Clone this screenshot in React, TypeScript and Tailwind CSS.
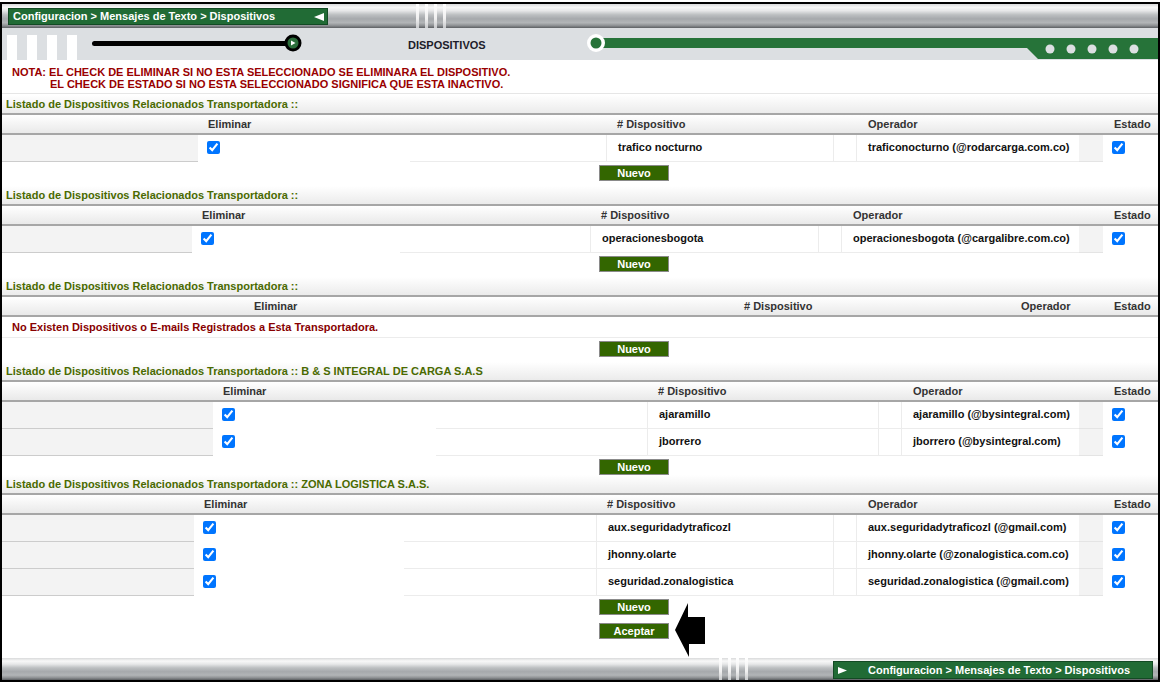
import React from 'react';

type Row = { disp: string; oper: string };

const metal =
  'bg-[linear-gradient(to_bottom,#d9dadb_0%,#f8f8f8_14%,#e6e7e8_28%,#bcbfc1_45%,#a6a9ac_62%,#b2b5b7_78%,#8d9093_90%,#5c5f62_100%)]';

const Check = () => (
  <input type="checkbox" defaultChecked className="w-[13px] h-[13px] m-0" />
);

const Button = ({ label }: { label: string }) => (
  <div className="w-[70px] h-[16px] shrink-0 bg-[#336600] border border-[#8a8a8a] flex items-center justify-center text-white font-bold text-[11px] leading-none">
    {label}
  </div>
);

const Grooves = ({ w }: { w: string }) => (
  <div className={`${w} h-full flex ${metal}`}>
    <div className="w-[6px]" />
    <div className="w-[3px] bg-[linear-gradient(to_bottom,#ffffff,#f0f0f0_60%,#c9cbcd)]" />
    <div className="w-[6px]" />
    <div className="w-[3px] bg-[linear-gradient(to_bottom,#ffffff,#f0f0f0_60%,#c9cbcd)]" />
    <div className="w-[6px]" />
    <div className="w-[3px] bg-[linear-gradient(to_bottom,#ffffff,#f0f0f0_60%,#c9cbcd)]" />
    <div className="w-[6px]" />
    <div className="w-[3px] bg-[linear-gradient(to_bottom,#ffffff,#f0f0f0_60%,#c9cbcd)]" />
  </div>
);

function Section({
  title,
  cols,
  rows,
  children,
}: {
  title: string;
  cols: string;
  rows?: Row[];
  children?: React.ReactNode;
}) {
  return (
    <div>
      <div className="h-[18px] flex items-center pl-[4px] bg-[linear-gradient(to_bottom,#ffffff,#ebebeb)] text-[#4a6a00] font-bold">
        {title}
      </div>
      <div
        className={`grid ${cols} h-[22px] border-y-2 border-[#a6a6a6] bg-[linear-gradient(to_bottom,#ffffff,#e9e9e9)] text-[#333333] font-bold`}
      >
        <div />
        <div className="flex items-center pl-[10px]">Eliminar</div>
        <div />
        <div className="flex items-center pl-[11px]"># Dispositivo</div>
        <div />
        <div className="flex items-center pl-[11px]">Operador</div>
        <div />
        <div className="flex items-center pl-[11px]">Estado</div>
      </div>
      {rows?.map((r) => (
        <div key={r.disp} className={`grid ${cols} h-[27px] text-[#111111] font-bold`}>
          <div className="bg-[#f3f3f3] border-b border-[#cccccc]" />
          <div className="flex items-center pl-[9px] pb-[2px]">
            <Check />
          </div>
          <div className="border-b border-[#ececec]" />
          <div className="flex items-center pl-[11px] pb-[2px] border-b border-l border-[#ececec]">{r.disp}</div>
          <div className="border-b border-x border-[#ececec]" />
          <div className="flex items-center pl-[11px] pb-[2px] border-b border-[#ececec]">{r.oper}</div>
          <div className="bg-[#f3f3f3] border-b border-[#e4e4e4]" />
          <div className="flex items-center pl-[9px] pb-[2px]">
            <Check />
          </div>
        </div>
      ))}
      {children}
    </div>
  );
}

export default function App() {
  const title = 'Listado de Dispositivos Relacionados Transportadora ::';

  return (
    <div className="w-[1160px] h-[683px] bg-white overflow-hidden font-['Liberation_Sans',Arial,sans-serif] text-[11px]">
      <div className="mt-[2px] h-[680px] border-2 border-black flex flex-col">
        {/* top bar */}
        <div className={`h-[24px] shrink-0 flex ${metal}`}>
          <div className="ml-[6px] mt-[4px] w-[320px] h-[17px] bg-[#216b35] border border-[#134a24] flex items-center pl-[4px] pr-[3px]">
            <span className="flex-1 text-white font-bold text-[11px]">
              Configuracion &gt; Mensajes de Texto &gt; Dispositivos
            </span>
            <svg width="10" height="8" viewBox="0 0 10 8">
              <polygon points="0,4 10,0 10,8" fill="#ffffff" />
            </svg>
          </div>
          <div className="ml-[82px]">
            <Grooves w="w-[40px]" />
          </div>
        </div>

        {/* title band */}
        <div className="h-[32px] shrink-0 flex bg-[#dcdfe2]">
          <div className="pl-[5px] flex gap-[10px] items-end">
            <div className="w-[10px] h-[25px] bg-white" />
            <div className="w-[10px] h-[25px] bg-white" />
            <div className="w-[10px] h-[25px] bg-white" />
            <div className="w-[10px] h-[25px] bg-white" />
          </div>
          <svg className="ml-[11px]" width="220" height="32" viewBox="0 0 220 32">
            <rect x="4" y="13" width="200" height="5" rx="2.5" fill="#000" />
            <circle cx="205" cy="15" r="8.5" fill="#000" />
            <circle cx="205" cy="15" r="5.5" fill="#2b6e3b" />
            <polygon points="203,12.5 203,17.5 207.5,15" fill="#ffffff" />
          </svg>
          <div className="ml-[100px] w-[178px] flex items-center text-[#1c1c2a] font-bold pt-[3px]">
            DISPOSITIVOS
          </div>
          <svg width="572" height="32" viewBox="0 0 572 32">
            <rect x="12" y="10" width="560" height="10" fill="#267339" />
            <polygon points="441,20 452,31 572,31 572,20" fill="#267339" />
            <circle cx="10" cy="15" r="9" fill="#ffffff" />
            <circle cx="10" cy="15" r="5.5" fill="#267339" />
            <circle cx="464" cy="21" r="4.5" fill="#dcdfe2" />
            <circle cx="485" cy="21" r="4.5" fill="#dcdfe2" />
            <circle cx="506" cy="21" r="4.5" fill="#dcdfe2" />
            <circle cx="527" cy="21" r="4.5" fill="#dcdfe2" />
            <circle cx="548" cy="21" r="4.5" fill="#dcdfe2" />
          </svg>
        </div>

        {/* note */}
        <div className="h-[34px] shrink-0 border-b border-[#e6e6e6] pt-[6px] leading-[12px] text-[#990000] font-bold mb-[1px]">
          <div className="pl-[10px]">NOTA: EL CHECK DE ELIMINAR SI NO ESTA SELECCIONADO SE ELIMINARA EL DISPOSITIVO.</div>
          <div className="pl-[48px]">EL CHECK DE ESTADO SI NO ESTA SELECCIONADO SIGNIFICA QUE ESTA INACTIVO.</div>
        </div>

        <Section
          title={title}
          cols="grid-cols-[196px_212px_196px_227px_24px_222px_24px_55px]"
          rows={[{ disp: 'trafico nocturno', oper: 'traficonocturno (@rodarcarga.com.co)' }]}
        >
          <div className="h-[24px] pt-[3px] pl-[597px]">
            <Button label="Nuevo" />
          </div>
        </Section>

        <Section
          title={title}
          cols="grid-cols-[190px_208px_190px_228px_24px_237px_24px_55px]"
          rows={[{ disp: 'operacionesbogota', oper: 'operacionesbogota (@cargalibre.com.co)' }]}
        >
          <div className="h-[24px] pt-[3px] pl-[597px]">
            <Button label="Nuevo" />
          </div>
        </Section>

        <Section title={title} cols="grid-cols-[242px_245px_244px_253px_24px_69px_24px_55px]">
          <div className="h-[21px] flex items-center pl-[10px] border-b border-[#ececec] text-[#880000] font-bold">
            No Existen Dispositivos o E-mails Registrados a Esta Transportadora.
          </div>
          <div className="h-[24px] pt-[3px] pl-[597px]">
            <Button label="Nuevo" />
          </div>
        </Section>

        <Section
          title="Listado de Dispositivos Relacionados Transportadora :: B & S INTEGRAL DE CARGA S.A.S"
          cols="grid-cols-[211px_223px_211px_231px_24px_177px_24px_55px]"
          rows={[
            { disp: 'ajaramillo', oper: 'ajaramillo (@bysintegral.com)' },
            { disp: 'jborrero', oper: 'jborrero (@bysintegral.com)' },
          ]}
        >
          <div className="h-[19px] pt-[3px] pl-[597px] overflow-hidden">
            <Button label="Nuevo" />
          </div>
        </Section>

        <Section
          title="Listado de Dispositivos Relacionados Transportadora :: ZONA LOGISTICA S.A.S."
          cols="grid-cols-[192px_210px_192px_237px_24px_222px_24px_55px]"
          rows={[
            { disp: 'aux.seguridadytraficozl', oper: 'aux.seguridadytraficozl (@gmail.com)' },
            { disp: 'jhonny.olarte', oper: 'jhonny.olarte (@zonalogistica.com.co)' },
            { disp: 'seguridad.zonalogistica', oper: 'seguridad.zonalogistica (@gmail.com)' },
          ]}
        >
          <div className="flex pt-[3px] pl-[597px]">
            <div className="flex flex-col gap-[8px]">
              <Button label="Nuevo" />
              <Button label="Aceptar" />
            </div>
            <svg className="ml-[6px] mt-[4px]" width="31" height="55" viewBox="0 0 31 55">
              <polygon points="0,27 13,0 13,14 30,14 30,41 14,41 14,54" fill="#000" />
            </svg>
          </div>
        </Section>

        {/* bottom bar */}
        <div className={`mt-auto h-[22px] shrink-0 flex ${metal}`}>
          <div className="ml-[711px]">
            <Grooves w="w-[35px]" />
          </div>
          <div className="ml-[85px] mt-[3px] w-[320px] h-[18px] bg-[#216b35] border border-[#134a24] flex items-center pl-[4px]">
            <svg width="9" height="7" viewBox="0 0 9 7">
              <polygon points="0,0 9,3.5 0,7" fill="#ffffff" />
            </svg>
            <span className="ml-[21px] text-white font-bold text-[11px]">
              Configuracion &gt; Mensajes de Texto &gt; Dispositivos
            </span>
          </div>
        </div>
      </div>
    </div>
  );
}
